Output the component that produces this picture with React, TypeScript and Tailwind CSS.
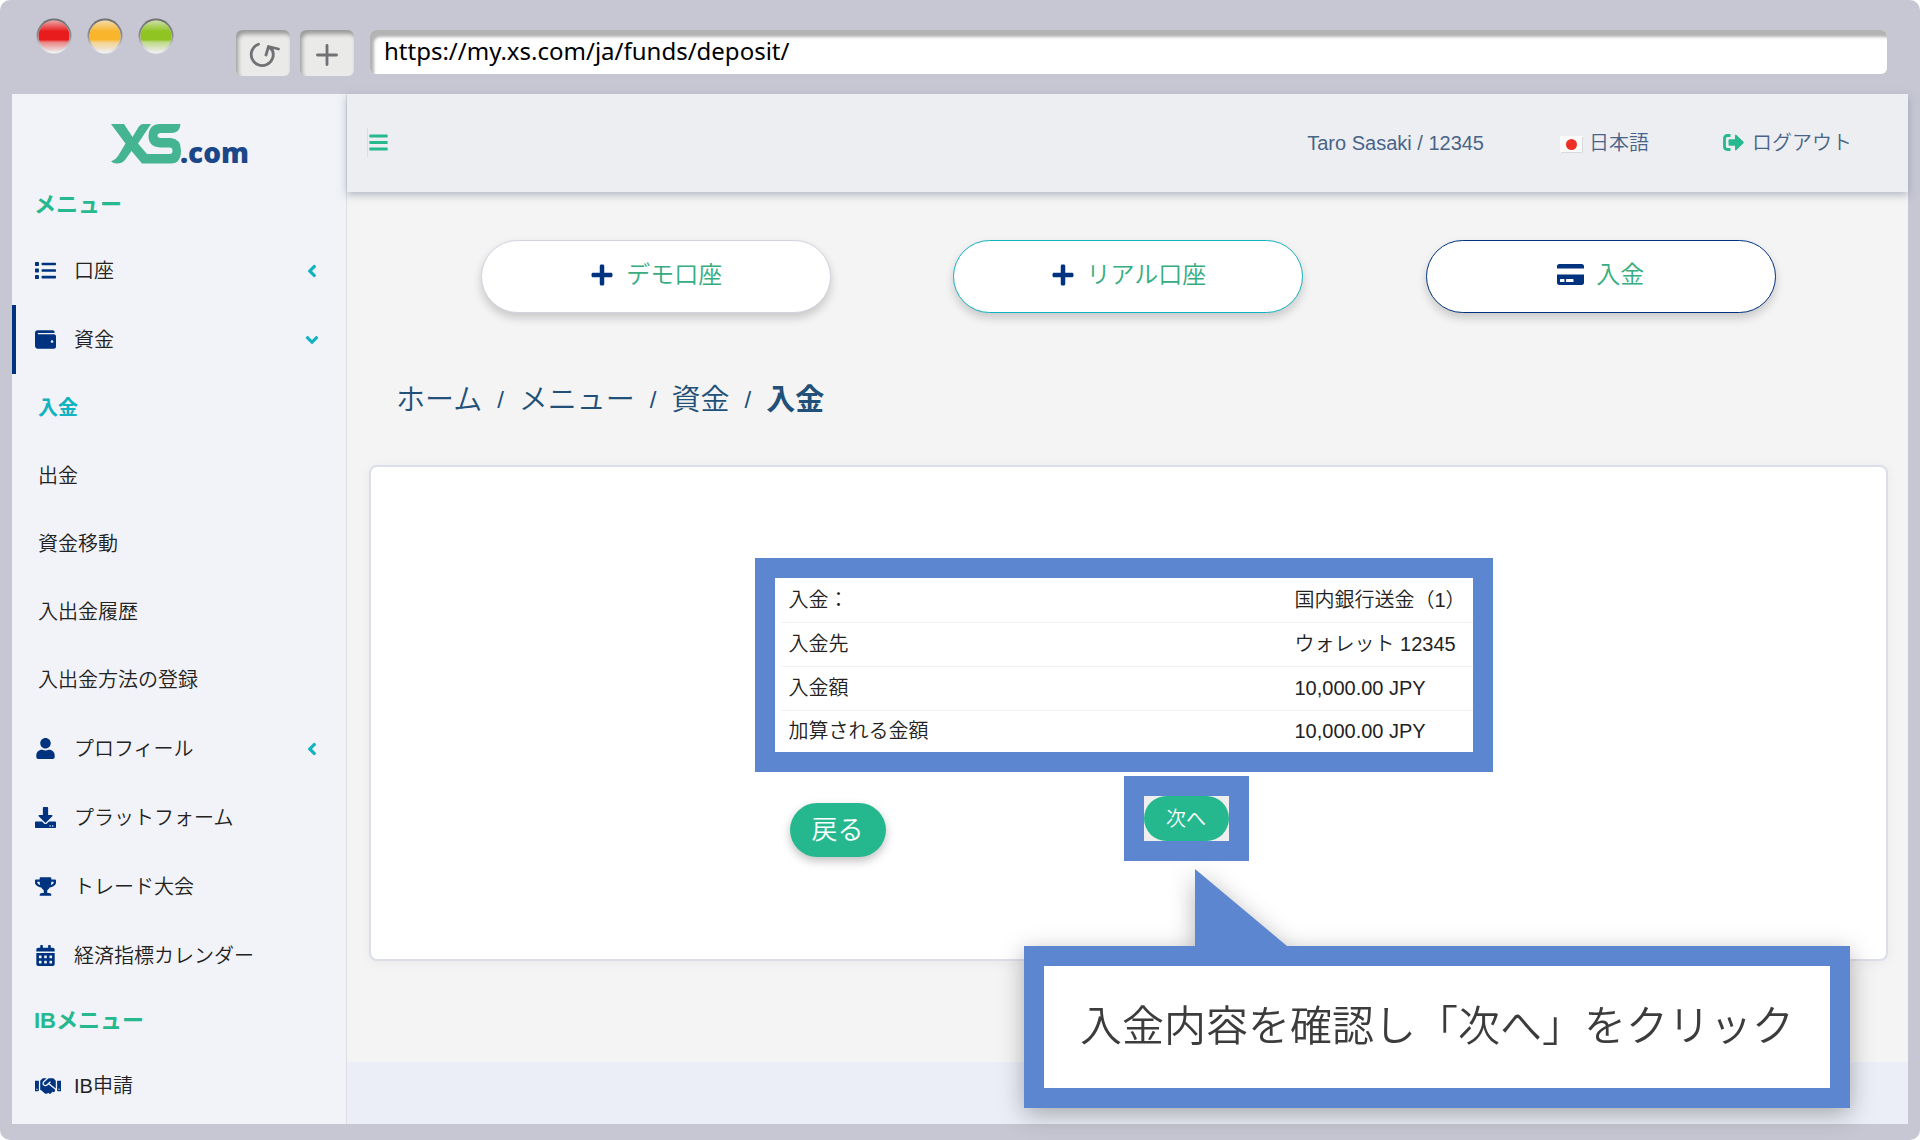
import type { ReactNode } from 'react';
import {
  FaAngleDown,
  FaAngleLeft,
  FaBars,
  FaCalendarAlt,
  FaCreditCard,
  FaDownload,
  FaHandshake,
  FaList,
  FaPlus,
  FaTrophy,
  FaUser,
  FaWallet,
} from 'react-icons/fa';

const fundsLinks = ['入金', '出金', '資金移動', '入出金履歴', '入出金方法の登録'];

const summary = [
  { label: '入金：', value: '国内銀行送金（1）' },
  { label: '入金先', value: 'ウォレット 12345' },
  { label: '入金額', value: '10,000.00 JPY' },
  { label: '加算される金額', value: '10,000.00 JPY' },
];

function Light({ id, color }: { id: string; color: string }) {
  return (
    <svg width="36" height="36" viewBox="0 0 36 36" aria-hidden="true">
      <defs>
        <linearGradient id={`${id}-fill`} x1="0" y1="0" x2="0" y2="1">
          <stop offset="0" stopColor={color} stopOpacity="0.35" />
          <stop offset="0.35" stopColor={color} />
          <stop offset="0.62" stopColor={color} />
          <stop offset="0.7" stopColor={color} stopOpacity="0.5" />
          <stop offset="1" stopColor={color} stopOpacity="0.05" />
        </linearGradient>
        <linearGradient id={`${id}-ring`} x1="0" y1="0" x2="0" y2="1">
          <stop offset="0" stopColor="#6f6f6f" />
          <stop offset="0.5" stopColor="#8d8d92" />
          <stop offset="1" stopColor="#f7f7f7" />
        </linearGradient>
      </defs>
      <circle cx="18" cy="18" r="17.5" fill={`url(#${id}-ring)`} />
      <circle cx="18" cy="18" r="15.5" fill="#eeeeee" />
      <circle cx="18" cy="18" r="15.5" fill={`url(#${id}-fill)`} />
    </svg>
  );
}

function ToolButton({ label, children }: { label: string; children: ReactNode }) {
  return (
    <button
      type="button"
      aria-label={label}
      className="flex h-[46px] w-[54px] items-center justify-center rounded-md bg-[#eaeae8] pt-1 text-[#707075] shadow-[inset_2px_4px_4px_#999999]"
    >
      {children}
    </button>
  );
}

function BrowserBar() {
  return (
    <div className="flex h-[94px] items-start pr-[33px] pl-9">
      <div className="flex gap-[15px] pt-[18px]">
        <Light id="close" color="#e81c1c" />
        <Light id="minimize" color="#f9b52c" />
        <Light id="zoom" color="#8fc422" />
      </div>
      <div className="flex gap-2.5 pt-[30px] pl-[62px]">
        <ToolButton label="Reload">
          <svg width="34" height="28" viewBox="0 0 34 28" fill="none" stroke="currentColor" strokeWidth="2.8" strokeLinecap="round" strokeLinejoin="round">
            <path d="M12.500 3.200A11 11 0 1 0 26 8.500" />
            <path d="M20 14L22.500 5.500L32.500 8M22.500 5.500L26 9" />
          </svg>
        </ToolButton>
        <ToolButton label="New tab">
          <svg width="22" height="22" viewBox="0 0 22 22" fill="none" stroke="currentColor" strokeWidth="2.8" strokeLinecap="round">
            <path d="M11 1.5v19M1.5 11h19" />
          </svg>
        </ToolButton>
      </div>
      <div className="flex-1 pt-[30px] pl-4">
        <input
          aria-label="URL"
          readOnly
          value="https://my.xs.com/ja/funds/deposit/"
          className="h-11 w-full rounded-md bg-white pb-1 pl-3.5 font-['Noto_Sans'] text-2xl font-normal text-black shadow-[inset_4px_7px_3px_#b3b3b3] outline-none"
        />
      </div>
    </div>
  );
}

function Logo() {
  return (
    <a href="#" aria-label="XS.com" className="flex h-[95px] items-center pt-2 pl-[99px]">
      <svg className="overflow-visible" width="150" height="48" viewBox="0 -2 150 48">
        <path
          fill="#44b590"
          d="M0 0H13L21.500 13L27.500 3Q29.500 0 32 0H40L27 19.500L36 30H58.500Q61.500 30 61.500 26.800Q61.500 23.500 58.500 23.500H49Q37.500 22.500 37.500 12Q38 0 49 0H69.500Q69 9 60 9H50Q46.500 9.200 46.500 11.500Q46.500 14 50 14H60Q70 15 70 26.500Q70 39.500 60 39.500H31L20.500 27L14 36Q11 39.500 6 39.500Q2 39.500 0 37.500Q4.500 36 7 32L14.500 19.500Z"
        />
        <text x="69" y="39" fill="#1b4688" fontFamily="'Open Sans', 'Noto Sans', sans-serif" fontSize="28" fontWeight="800">.com</text>
      </svg>
    </a>
  );
}

function SidebarHeading({ children }: { children: ReactNode }) {
  return <h2 className="px-[22px] text-[22px] leading-8 font-bold text-[#26b98f]">{children}</h2>;
}

type SidebarItemProps = {
  icon: ReactNode;
  label: string;
  active?: boolean;
  chevron?: 'left' | 'down';
};

function SidebarItem({ icon, label, active, chevron }: SidebarItemProps) {
  return (
    <li>
      <a
        href="#"
        className={`flex h-[69px] items-center border-l-4 pr-6 pl-[19px] ${active ? 'border-[#00337f]' : 'border-transparent'}`}
      >
        <span className="w-[39px] text-[21px] text-[#00337f]">{icon}</span>
        <span className="flex-1">{label}</span>
        {chevron === 'left' && <FaAngleLeft className="text-xl text-[#12b2c0]" />}
        {chevron === 'down' && <FaAngleDown className="text-xl text-[#12b2c0]" />}
      </a>
    </li>
  );
}

function Sidebar() {
  return (
    <aside className="w-[335px] shrink-0 border-r border-[#dcdde0] bg-[#f1f3f8] text-xl text-[#222222]">
      <Logo />
      <SidebarHeading>メニュー</SidebarHeading>
      <ul className="pt-[15px]">
        <SidebarItem icon={<FaList />} label="口座" chevron="left" />
        <SidebarItem icon={<FaWallet />} label="資金" chevron="down" active />
        {fundsLinks.map((link, i) => (
          <li key={link}>
            <a href="#" className={`flex h-[68px] items-center pl-[26px] ${i === 0 ? 'font-bold text-[#12b2c0]' : ''}`}>
              {link}
            </a>
          </li>
        ))}
        <SidebarItem icon={<FaUser />} label="プロフィール" chevron="left" />
        <SidebarItem icon={<FaDownload />} label="プラットフォーム" />
        <SidebarItem icon={<FaTrophy />} label="トレード大会" />
        <SidebarItem icon={<FaCalendarAlt />} label="経済指標カレンダー" />
      </ul>
      <div className="pt-[15px]">
        <SidebarHeading>IBメニュー</SidebarHeading>
      </div>
      <ul className="pt-3.5">
        <SidebarItem icon={<FaHandshake className="text-[26px]" />} label="IB申請" />
      </ul>
    </aside>
  );
}

function LogoutIcon() {
  return (
    <svg width="21" height="17" viewBox="0 0 21 17" aria-hidden="true">
      <path d="M7.500 1.500H4.500Q1.500 1.500 1.500 4.500V12.500Q1.500 15.500 4.500 15.500H7.500" fill="none" stroke="#26b98f" strokeWidth="2.800" />
      <path d="M6.500 5.200H12V1.500Q12.200 0 13.500 1L20.500 7.800Q21 8.500 20.500 9.200L13.500 16Q12.200 17 12 15.500V11.800H6.500Q5.500 11.800 5.500 10.800V6.200Q5.500 5.200 6.500 5.200Z" fill="#26b98f" />
    </svg>
  );
}

function Header() {
  return (
    <header className="relative flex h-[98px] items-center bg-[#eceef2] pr-14 pb-px pl-5 text-xl text-[#4a6487] shadow-[0_3px_8px_rgba(110,125,145,0.5)]">
      <button type="button" aria-label="メニュー" className="border-l border-[#dddddd] py-1 text-[21px] text-[#26b98f]">
        <FaBars />
      </button>
      <div className="ml-auto flex items-center">
        <span>Taro Sasaki / 12345</span>
        <a href="#" className="ml-[76px] flex items-center gap-1.5">
          <svg width="23" height="20" viewBox="0 0 23 20" aria-hidden="true">
            <rect y="3" width="23" height="17" fill="#fafafa" />
            <path d="M22.500 4V19.500H1" fill="none" stroke="#d9d9dc" />
            <circle cx="11.500" cy="11.500" r="5.500" fill="#ee3124" />
          </svg>
          日本語
        </a>
        <a href="#" className="ml-[74px] flex items-center gap-2">
          <LogoutIcon />
          ログアウト
        </a>
      </div>
    </header>
  );
}

type PillProps = { border: string; icon: ReactNode; label: string };

function Pill({ border, icon, label }: PillProps) {
  return (
    <div className="flex justify-center">
      <button
        type="button"
        className={`flex h-[73px] w-[350px] items-center justify-center gap-3 rounded-full border bg-white pb-1 text-2xl text-[#35ad80] shadow-[0_5px_10px_rgba(0,0,0,0.18)] ${border}`}
      >
        <span className="text-[#00337f]">{icon}</span>
        {label}
      </button>
    </div>
  );
}

function Breadcrumb() {
  return (
    <nav className="flex items-center gap-[15px] pl-[49px] text-[29px] leading-10 text-[#235078]">
      <a href="#">ホーム</a>
      <span className="text-2xl">/</span>
      <a href="#">メニュー</a>
      <span className="text-2xl">/</span>
      <a href="#">資金</a>
      <span className="text-2xl">/</span>
      <span className="font-bold">入金</span>
    </nav>
  );
}

function Callout() {
  return (
    <div className="absolute right-[58px] bottom-4 drop-shadow-[0_6px_12px_rgba(0,0,0,0.3)]">
      <svg className="ml-[171px] block" width="92" height="77" viewBox="0 0 92 77" aria-hidden="true">
        <path d="M0 0L92 77H0Z" fill="#5c86d0" />
      </svg>
      <p className="border-20 border-[#5c86d0] bg-white px-9 py-[29px] text-[42px] leading-[64px] whitespace-nowrap text-[#3c3c3c]">
        入金内容を確認し「次へ」をクリック
      </p>
    </div>
  );
}

function DepositCard() {
  return (
    <section className="mt-[45px] mr-5 ml-[22px] flex flex-col items-center rounded-lg border-2 border-[#dcdee9] bg-white pt-[91px] pr-2.5 pb-[98px] shadow-[0_2px_12px_rgba(0,0,0,0.05)]">
      <div className="w-[738px]">
        <div className="border-20 border-[#5c86d0] pl-1.5">
          <table className="w-full text-xl text-[#222222]">
            <tbody>
              {summary.map((row) => (
                <tr key={row.label} className="h-11 border-b border-[#f2f2f2] last:h-[42px] last:border-b-0">
                  <th scope="row" className="pl-2 text-left font-[350]">{row.label}</th>
                  <td className="w-[178px]">{row.value}</td>
                </tr>
              ))}
            </tbody>
          </table>
        </div>
        <div className="flex items-start justify-between pt-1 pr-[244px] pl-[35px]">
          <button
            type="button"
            className="mt-[27px] h-[54px] w-24 rounded-full bg-[#25b88f] text-[26px] text-white shadow-[0_4px_10px_rgba(0,0,0,0.25)]"
          >
            戻る
          </button>
          <div className="border-20 border-[#5c86d0] bg-[#eeeeee]">
            <button type="button" className="block h-[45px] w-[85px] rounded-full bg-[#25b88f] text-xl text-white">
              次へ
            </button>
          </div>
        </div>
      </div>
    </section>
  );
}

function App() {
  return (
    <div className="bg-white">
      <div className="flex min-h-screen flex-col rounded-[10px] bg-[#c7c7d3] font-['Liberation_Sans','Noto_Sans_CJK_JP',sans-serif] font-[350]">
        <BrowserBar />
        <div className="mx-3 mb-4 flex flex-1">
          <Sidebar />
          <div className="relative flex min-w-0 flex-1 flex-col bg-[#f4f4f4]">
            <Header />
            <main className="flex-1">
              <div className="grid grid-cols-3 pt-12 pr-[71px] pl-[73px]">
                <Pill border="border-[#d0d2de]" icon={<FaPlus />} label="デモ口座" />
                <Pill border="border-[#12b2c0]" icon={<FaPlus />} label="リアル口座" />
                <Pill border="border-[#00337f]" icon={<FaCreditCard className="text-[27px]" />} label="入金" />
              </div>
              <div className="pt-[67px]">
                <Breadcrumb />
              </div>
              <DepositCard />
            </main>
            <footer className="h-[62px] bg-[#ebeef7]" />
            <Callout />
          </div>
        </div>
      </div>
    </div>
  );
}

export default App;
